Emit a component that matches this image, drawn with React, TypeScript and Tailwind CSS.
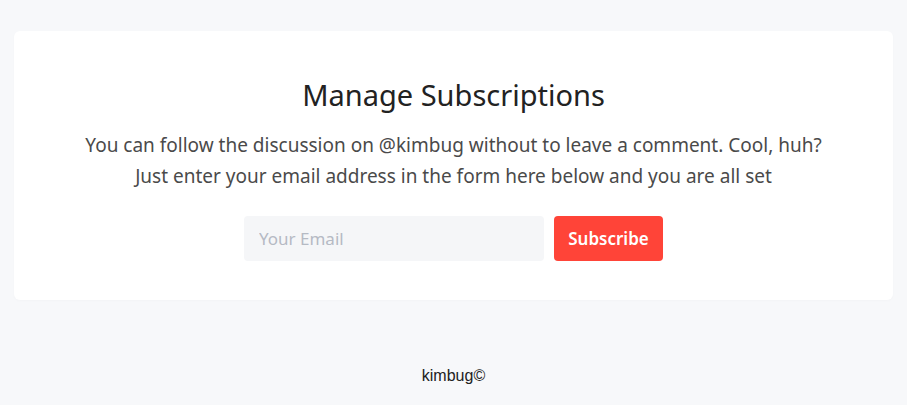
export default function App() {
  const font = { fontFamily: '"Noto Sans", sans-serif' };
  return (
    <div className="min-h-[405px] bg-[#f7f8fa] px-[14px] pt-[31px]" style={font}>
      <div className="bg-white rounded-[6px] h-[269px] flex flex-col items-center pt-[46px] shadow-[0_1px_3px_rgba(0,0,0,0.02)]">
        <h1 className="text-[29px] leading-[36px] text-[#222222]">Manage Subscriptions</h1>
        <p className="mt-[17px] text-[19px] leading-[31px] text-[#4a4a4a] text-center">
          You can follow the discussion on @kimbug without to leave a comment. Cool, huh?
          <br />
          Just enter your email address in the form here below and you are all set
        </p>
        <div className="mt-[24px] flex gap-[10px]">
          <input
            placeholder="Your Email"
            className="w-[300px] h-[45px] rounded-[4px] bg-[#f5f6f8] px-[15px] text-[17px] text-[#333] placeholder:text-[#b5bac4] outline-none"
          />
          <button className="w-[109px] h-[45px] rounded-[4px] bg-[#ff4438] text-white text-[17px] font-semibold">
            Subscribe
          </button>
        </div>
      </div>
      <div className="mt-[64px] text-center text-[16px] text-[#222]" style={{ fontFamily: '"Liberation Sans", Arial, sans-serif' }}>
        kimbug©
      </div>
    </div>
  );
}
